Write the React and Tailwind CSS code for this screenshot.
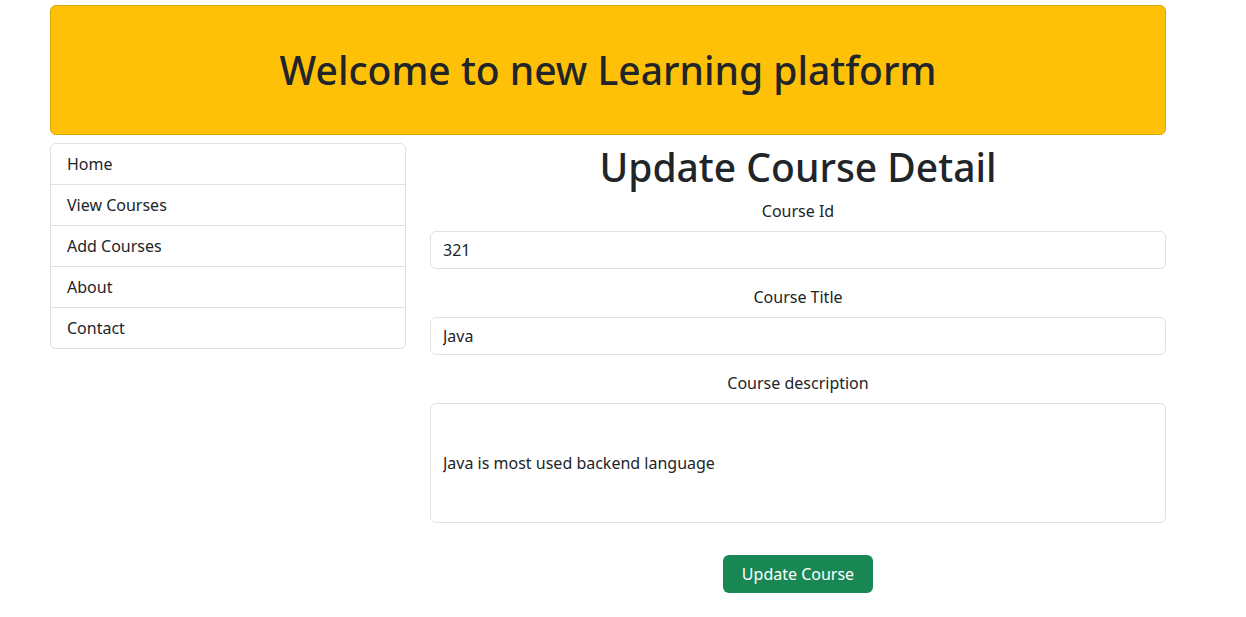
import React from 'react';

const font = { fontFamily: '"Noto Sans", "Open Sans", sans-serif' };

const links = ['Home', 'View Courses', 'Add Courses', 'About', 'Contact'];

const Field = ({ label, value, tall }) => (
    <div className="mb-4">
        <label className="block text-center text-base leading-6 text-[#212529] mb-2">{label}</label>
        <input
            type="text"
            defaultValue={value}
            className={`w-full ${tall ? 'h-[120px]' : 'h-[38px]'} px-3 text-base text-[#212529] bg-white border border-[#dee2e6] rounded-md outline-none`}
        />
    </div>
);

export default function App() {
    return (
        <div className="min-h-screen bg-white text-[#212529]" style={font}>
            <div className="w-[1116px] ml-[50px] pt-[5px]">
                {/* Header */}
                <div className="h-[130px] bg-[#ffc107] border border-[#d9a406] rounded-md flex items-center justify-center">
                    <h1 className="text-[39px] font-medium leading-tight">Welcome to new Learning platform</h1>
                </div>

                <div className="flex gap-6 mt-2">
                    {/* Sidebar */}
                    <div className="w-[356px] shrink-0">
                        <div className="border border-[#dee2e6] rounded-md overflow-hidden">
                            {links.map((l, i) => (
                                <div key={l} className={`${i > 0 ? 'h-[41px] border-t border-[#dee2e6]' : 'h-[40px]'} px-4 flex items-center text-base`}>
                                    {l}
                                </div>
                            ))}
                        </div>
                    </div>

                    {/* Form */}
                    <div className="flex-1">
                        <h1 className="text-center text-[39px] font-medium leading-[48px] mb-2">Update Course Detail</h1>
                        <Field label="Course Id" value="321" />
                        <Field label="Course Title" value="Java" />
                        <Field label="Course description" value="Java is most used backend language" tall />
                        <div className="flex justify-center pt-4">
                            <button className="h-[38px] px-[19px] rounded-md bg-[#198754] text-white text-base">Update Course</button>
                        </div>
                    </div>
                </div>
            </div>
        </div>
    );
}
